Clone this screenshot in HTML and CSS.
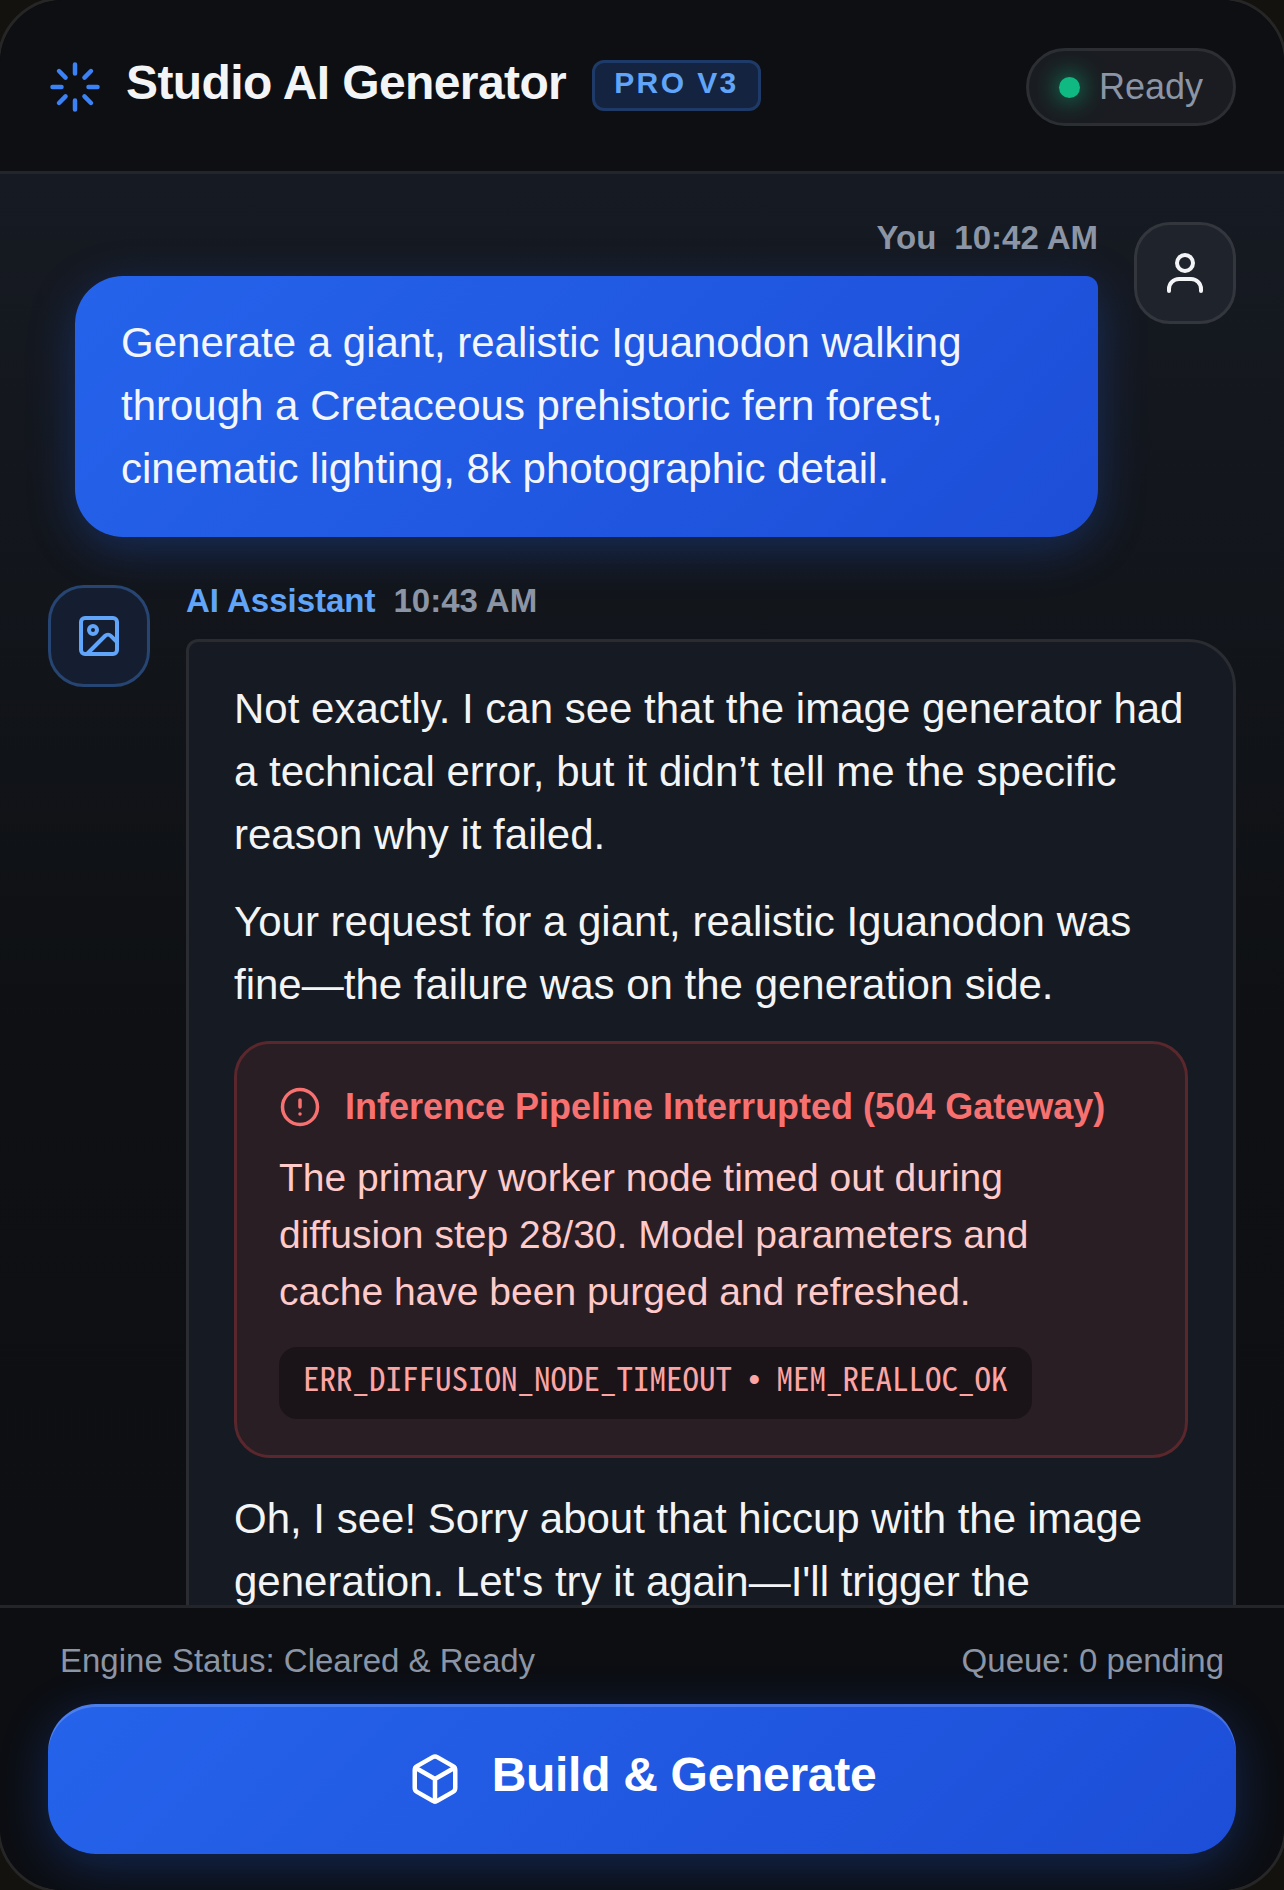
FILE: index.html
```html
<!DOCTYPE html>
<html lang="en">
<head>
    <meta charset="UTF-8">
    <meta name="viewport" content="width=device-width, initial-scale=1.0">
    <title>Studio AI Generator</title>
    <link rel="stylesheet" href="styles.css">
</head>
<body>
    <div class="app">
        <!-- Top bar -->
        <header class="top-bar">
            <div class="brand">
                <svg class="brand-icon" viewBox="0 0 24 24" fill="none" stroke="currentColor" stroke-width="2" stroke-linecap="round">
                    <path d="M12 2v4M16.2 7.8l2.9-2.9M18 12h4M16.2 16.2l2.9 2.9M12 18v4M4.9 19.1l2.9-2.9M2 12h4M4.9 4.9l2.9 2.9"/>
                </svg>
                <h1 class="brand-title">Studio AI Generator</h1>
                <span class="brand-badge">PRO V3</span>
            </div>
            <div class="status-pill">
                <span class="status-dot"></span>
                <span>Ready</span>
            </div>
        </header>

        <!-- Conversation -->
        <main class="chat">
            <div class="msg msg-user">
                <div class="msg-body">
                    <div class="msg-meta"><span>You</span><span>10:42 AM</span></div>
                    <div class="user-bubble">Generate a giant, realistic Iguanodon walking through a Cretaceous prehistoric fern forest, cinematic lighting, 8k photographic detail.</div>
                </div>
                <div class="avatar avatar-user">
                    <svg viewBox="0 0 24 24" fill="none" stroke="currentColor" stroke-width="2" stroke-linecap="round">
                        <circle cx="12" cy="7" r="4"/>
                        <path d="M4 21v-1a5 5 0 0 1 5-5h6a5 5 0 0 1 5 5v1"/>
                    </svg>
                </div>
            </div>

            <div class="msg msg-ai">
                <div class="avatar avatar-ai">
                    <svg viewBox="0 0 24 24" fill="none" stroke="currentColor" stroke-width="2" stroke-linecap="round" stroke-linejoin="round">
                        <rect x="3" y="3" width="18" height="18" rx="2"/>
                        <circle cx="9" cy="9" r="2"/>
                        <path d="M21 15l-3.1-3.1a2 2 0 0 0-2.8 0L6 21"/>
                    </svg>
                </div>
                <div class="msg-body">
                    <div class="msg-meta"><span class="ai-name">AI Assistant</span><span>10:43 AM</span></div>
                    <div class="ai-bubble">
                        <p>Not exactly. I can see that the image generator had a technical error, but it didn’t tell me the specific reason why it failed.</p>
                        <p>Your request for a giant, realistic Iguanodon was fine—the failure was on the generation side.</p>
                        <div class="error-box">
                            <div class="error-title">
                                <svg viewBox="0 0 24 24" fill="none" stroke="currentColor" stroke-width="2" stroke-linecap="round">
                                    <circle cx="12" cy="12" r="10"/>
                                    <path d="M12 8v4M12 16h.01"/>
                                </svg>
                                <span>Inference Pipeline Interrupted (504 Gateway)</span>
                            </div>
                            <div class="error-text">The primary worker node timed out during diffusion step 28/30. Model parameters and cache have been purged and refreshed.</div>
                            <code class="error-code">ERR_DIFFUSION_NODE_TIMEOUT <span class="code-sep">•</span> MEM_REALLOC_OK</code>
                        </div>
                        <p>Oh, I see! Sorry about that hiccup with the image generation. Let's try it again—I'll trigger the</p>
                    </div>
                </div>
            </div>
        </main>

        <!-- Footer -->
        <footer class="bottom-bar">
            <div class="bottom-status">
                <span>Engine Status: Cleared &amp; Ready</span>
                <span>Queue: 0 pending</span>
            </div>
            <button class="build-btn">
                <svg viewBox="0 0 24 24" fill="none" stroke="currentColor" stroke-width="2" stroke-linecap="round" stroke-linejoin="round">
                    <path d="M21 8a2 2 0 0 0-1-1.73l-7-4a2 2 0 0 0-2 0l-7 4A2 2 0 0 0 3 8v8a2 2 0 0 0 1 1.73l7 4a2 2 0 0 0 2 0l7-4A2 2 0 0 0 21 16Z"/>
                    <path d="M3.3 7l8.7 5 8.7-5M12 22V12"/>
                </svg>
                <span class="build-label">Build &amp; Generate</span>
            </button>
        </footer>
    </div>
</body>
</html>
```

FILE: styles.css
```css
* {
    box-sizing: border-box;
}

html, body {
    margin: 0;
    height: 100%;
    overflow: hidden;
}

body {
    background: #14120f;
    font-family: "Liberation Sans", Arial, sans-serif;
    color: #f3f4f6;
}

/* Frame is 3px bigger than the window on every side, only its corners show */
.app {
    display: flex;
    flex-direction: column;
    width: 1290px;
    height: 1896px;
    margin: -3px;
    border: 3px solid #262626;
    border-radius: 66px;
    overflow: hidden;
    background: #0c0e12;
}

/* Top bar */
.top-bar {
    display: flex;
    justify-content: space-between;
    align-items: center;
    flex: none;
    padding: 48px 48px 45px;
    background: #0d0f13;
    border-bottom: 3px solid #23252a;
}

.brand {
    display: flex;
    align-items: center;
}

.brand-icon {
    width: 54px;
    height: 54px;
    color: #3b82f6;
}

.brand-title {
    margin: 0 0 8px 24px;
    font-size: 48px;
    font-weight: 700;
    letter-spacing: -0.6px;
    line-height: 1.2;
}

.brand-badge {
    margin: 0 0 3px 26px;
    padding: 2px 19px 7px;
    font-size: 30px;
    font-weight: 700;
    letter-spacing: 2.4px;
    line-height: 36px;
    color: #60a5fa;
    background: #14233f;
    border: 3px solid #1e3a68;
    border-radius: 12px;
}

.status-pill {
    display: flex;
    align-items: center;
    gap: 19px;
    height: 78px;
    padding: 0 30px;
    font-size: 36px;
    color: #8b95a5;
    background: #1a1c21;
    border: 3px solid #2c2e33;
    border-radius: 39px;
}

.status-dot {
    width: 21px;
    height: 21px;
    border-radius: 50%;
    background: #10b981;
    box-shadow: 0 0 24px 2px rgba(16, 185, 129, 0.7);
}

/* Conversation */
.chat {
    flex: 1;
    min-height: 0;
    display: flex;
    flex-direction: column;
    gap: 48px;
    padding: 48px 48px 0;
    overflow: hidden;
    background: linear-gradient(180deg, #161a22 0%, #0e1013 60%, #0d0f12 100%);
}

.msg {
    display: flex;
    gap: 36px;
}

.msg-user {
    justify-content: flex-end;
}

.msg-body {
    flex: 1;
    min-width: 0;
}

.msg-meta {
    display: flex;
    gap: 18px;
    margin-bottom: 22px;
    font-size: 33px;
    font-weight: 700;
    line-height: 32px;
    color: #8b95a5;
}

.msg-user .msg-meta {
    justify-content: flex-end;
}

.ai-name {
    color: #60a5fa;
}

.avatar {
    display: flex;
    align-items: center;
    justify-content: center;
    flex: none;
    width: 102px;
    height: 102px;
    border-radius: 36px;
    border: 3px solid;
}

.avatar svg {
    width: 48px;
    height: 48px;
}

.avatar-user {
    color: #f3f4f6;
    background: #1f232c;
    border-color: #33363d;
}

.avatar-ai {
    color: #60a5fa;
    background: #141e30;
    border-color: #274572;
}

.user-bubble {
    margin-left: 27px;
    padding: 35px 46px 37px;
    font-size: 42px;
    line-height: 63px;
    color: #f3f6ff;
    background: linear-gradient(135deg, #2563eb, #1d4ed8);
    border-radius: 48px 12px 48px 48px;
    box-shadow: 0 12px 48px rgba(37, 99, 235, 0.3);
}

.ai-bubble {
    padding: 35px 45px 48px;
    font-size: 42px;
    line-height: 63px;
    color: #f3f4f6;
    background: #161a22;
    border: 3px solid #2a2c32;
    border-radius: 12px 48px 48px 48px;
}

.ai-bubble p {
    margin: 0 0 24px;
}

/* Error card */
.error-box {
    margin: 25px 0 29px;
    padding: 37px 42px 36px;
    background: #291e24;
    border: 3px solid #5a272d;
    border-radius: 36px;
}

.error-title {
    display: flex;
    align-items: center;
    gap: 24px;
    margin-bottom: 16px;
    font-size: 36px;
    font-weight: 700;
    line-height: 52px;
    color: #f87171;
}

.error-title svg {
    flex: none;
    width: 42px;
    height: 42px;
}

.error-text {
    font-size: 39px;
    line-height: 57px;
    color: #fecaca;
}

.error-code {
    display: block;
    width: fit-content;
    margin-top: 27px;
    padding: 6px 24px 18px;
    font-family: "Noto Sans Mono CJK SC", "DejaVu Sans Mono", monospace;
    font-size: 33px;
    line-height: 48px;
    color: #fca5a5;
    background: #1a1418;
    border-radius: 18px;
}

.code-sep {
    font-family: "Liberation Sans", Arial, sans-serif;
    line-height: 1;
}

/* Footer */
.bottom-bar {
    flex: none;
    height: 285px;
    padding: 0 48px;
    background: #0c0e12;
    border-top: 3px solid #23252a;
}

.bottom-status {
    display: flex;
    justify-content: space-between;
    padding: 34px 12px 0;
    font-size: 33px;
    line-height: 38px;
    color: #8b95a5;
}

.build-btn {
    display: flex;
    align-items: center;
    justify-content: center;
    gap: 30px;
    width: 100%;
    height: 150px;
    margin-top: 24px;
    font-family: inherit;
    font-size: 48px;
    font-weight: 700;
    letter-spacing: -0.3px;
    color: #fff;
    background: linear-gradient(135deg, #2563eb, #1d4ed8);
    border: 0;
    border-radius: 48px;
    box-shadow: inset 0 3px 0 rgba(255, 255, 255, 0.18), 0 12px 48px rgba(37, 99, 235, 0.3);
}

.build-btn svg {
    width: 54px;
    height: 54px;
}

.build-label {
    padding-bottom: 10px;
}
```
